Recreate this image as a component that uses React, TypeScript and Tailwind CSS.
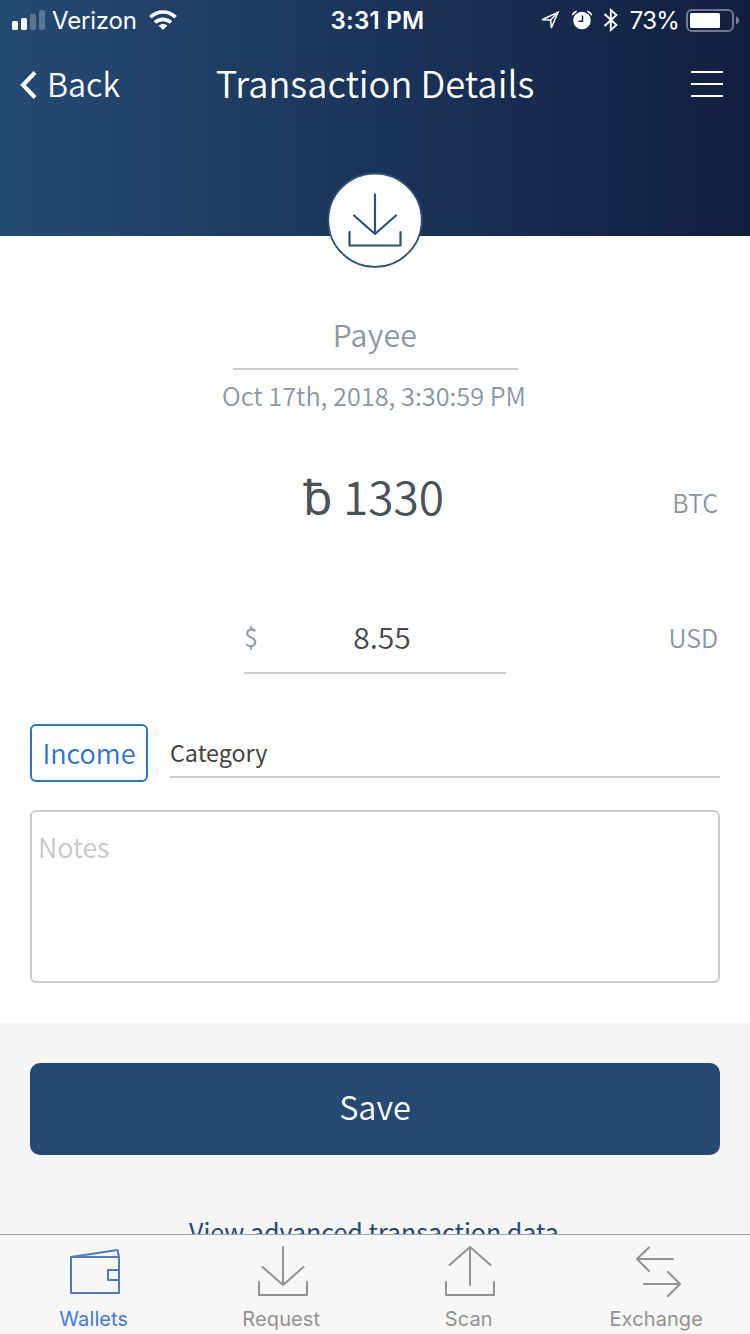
import React from "react";

const sans = "font-['Noto_Sans_CJK_SC',sans-serif]";
const system = "font-['Inter',sans-serif]";

function StatusBar() {
  return (
    <div className={`flex h-10 items-center justify-between pl-3 pr-[10px] text-white ${system}`}>
      <div className="flex w-[260px] items-center">
        <svg width="34" height="20" viewBox="0 0 34 20" fill="#fff">
          <rect x="0" y="11" width="6" height="9" rx="1.8" />
          <rect x="9" y="8" width="6" height="12" rx="1.8" />
          <rect x="18" y="4" width="6" height="16" rx="1.8" opacity=".25" />
          <rect x="27" y="0" width="6" height="20" rx="1.8" opacity=".25" />
        </svg>
        <span className="ml-[6px] pt-[2px] text-2xl leading-[38px] tracking-[-0.2px]">Verizon</span>
        <svg className="ml-[12px]" width="28" height="20" viewBox="0 0 28 20" fill="none" stroke="#fff" strokeWidth="3.600">
          <path d="M1.300 7.300C8.500 .2 19.500 .2 26.700 7.300" />
          <path d="M6 12.500C10.500 8.300 17.500 8.300 22 12.500" />
          <path d="M14 20 9.700 15.700C12 13.500 16 13.500 18.300 15.700Z" fill="#fff" stroke="none" />
        </svg>
      </div>
      <span className="pl-[3px] pt-[2px] text-2xl font-semibold leading-[38px] tracking-[0.3px]">3:31 PM</span>
      <div className="flex w-[260px] items-center justify-end">
        <svg width="22" height="22" viewBox="0 0 22 22" fill="none" stroke="#fff" strokeWidth="1.500">
          <path d="M3 10.700 19 3.300 12.300 19 11.700 11Z" />
          <path d="M11.700 11 18.500 3.500" strokeWidth="1.300" />
        </svg>
        <svg className="ml-[11px]" width="20" height="20" viewBox="0 0 20 20">
          <circle cx="10" cy="10.500" r="8.800" fill="#fff" />
          <path d="M.2 5.200A5 5 0 0 1 4.800 1.200ZM15.200 1.200A5 5 0 0 1 19.800 5.200Z" fill="#fff" stroke="#fff" strokeWidth="1" />
          <path d="M10.500 5.500V11.300H6.500" fill="none" stroke="#18294f" strokeWidth="1.500" />
        </svg>
        <svg className="ml-[11px]" width="16" height="24" viewBox="0 0 16 24" fill="none" stroke="#fff" strokeWidth="1.900">
          <path d="M1.500 6 13.500 17 7.800 22V2L13.500 7 1.500 18" />
        </svg>
        <span className="ml-[11px] pt-[2px] text-2xl leading-[38px] tracking-[-0.8px]">73%</span>
        <svg className="ml-[7px] mt-[1px]" width="54" height="23" viewBox="0 0 54 23">
          <rect x="1" y="1" width="46" height="21" rx="5" fill="none" stroke="#fff" strokeOpacity=".4" strokeWidth="2" />
          <rect x="4" y="4" width="30" height="15" rx="1.500" fill="#fff" />
          <path d="M50 7.500C54 9 54 14 50 15.500Z" fill="#fff" opacity=".45" />
        </svg>
      </div>
    </div>
  );
}

function NavBar() {
  return (
    <div className="flex h-[88px] items-start justify-between pl-5 pr-[27px] text-white">
      <div className="flex w-[180px] items-start">
        <svg className="mt-[31px]" width="18" height="28" viewBox="0 0 18 28" fill="none" stroke="#fff" strokeWidth="4">
          <path d="M15 1.500 3 14 15 26.500" />
        </svg>
        <span className="ml-[9px] text-[32.300px] font-[350] leading-[86px]">Back</span>
      </div>
      <h1 className="-ml-[1px] whitespace-nowrap text-[36.300px] font-[350] leading-[85px]">Transaction Details</h1>
      <div className="flex w-[172px] justify-end">
        <svg className="mt-[30px]" width="32" height="28" viewBox="0 0 32 28" stroke="#fff" strokeWidth="2">
          <path d="M0 2H32M0 14H32M0 26H32" />
        </svg>
      </div>
    </div>
  );
}

const icons = {
  wallet: "M4 12H52V48H4ZM4 12 50.500 5 52 12M52 25H41V35H52",
  request: "M29 2V40M8.500 22 29 40 49.500 22M5 37V50H53V37",
  scan: "M28 40V2M7.500 20 28 2 48.500 20M4 37V50H52V37",
  exchange: "M44 14H8M20 2.500 8 14 20 26M15 39H51M39 27 51 39 39 51",
};

function Tab({ icon, label, active = false }: { icon: keyof typeof icons; label: string; active?: boolean }) {
  return (
    <div className={`flex flex-1 flex-col items-center pt-[10px] ${active ? "text-[#4477e8]" : "text-[#929292]"}`}>
      <svg width="54" height="52" viewBox="0 0 54 52" fill="none" stroke={active ? "#527abd" : "#929292"} strokeWidth="2" strokeLinecap="round" strokeLinejoin="round">
        <path d={icons[icon]} />
      </svg>
      <span className={`mt-[10px] text-[20px] leading-6 tracking-[0.1px] ${system}`}>{label}</span>
    </div>
  );
}

export default function App() {
  return (
    <div className={`flex h-[1334px] w-[750px] flex-col overflow-hidden bg-white ${sans}`}>
      <header className="relative h-[236px] shrink-0 bg-linear-to-r from-[#244b73] to-[#111e40]">
        <StatusBar />
        <NavBar />
        <svg className="absolute left-[327px] top-[172px]" width="96" height="96" viewBox="0 0 96 96" fill="none" stroke="#28527a" strokeWidth="2">
          <circle cx="48" cy="48.200" r="46.700" fill="#fff" strokeWidth="1.800" />
          <path d="M48 22.500V62M27 43.500 48 62 69 43.500M22.500 60V73.500H73.500V60" strokeWidth="2.200" strokeLinecap="round" strokeLinejoin="round" />
        </svg>
      </header>

      <main className="flex min-h-0 flex-1 flex-col">
        <section className="flex flex-col items-center">
          <div className="mt-[66px] h-[68px] w-[285px] border-b-2 border-[#cccccc] text-center text-[30.300px] font-[350] leading-[64px] tracking-[0.3px] text-[#8a96a3]">Payee</div>
          <div className="-ml-[2px] h-[54px] text-[25.300px] font-[350] leading-[51px] text-[#8a96a3]">Oct 17th, 2018, 3:30:59 PM</div>
        </section>

        <section className="mt-9 grid h-[70px] grid-cols-[200px_1fr_200px] items-center px-8">
          <span />
          <span className="pr-[3px] text-center text-[46px] font-[350] leading-[66px] text-[#4a5157]">
            <span className="font-['Noto_Sans',sans-serif] text-[48px] font-normal leading-none">ƀ</span> 1330
          </span>
          <span className="pt-4 text-right text-[25px] font-[350] text-[#8a96a3]">BTC</span>
        </section>

        <section className="mt-[70px] flex h-[74px] justify-between pl-[244px] pr-8">
          <div className="flex h-[74px] w-[262px] items-center border-b-2 border-[#cccccc]">
            <span className="w-[14px] pt-[2px] text-[25px] font-[350] text-[#8a96a3]">$</span>
            <span className="w-[248px] text-center text-[30px] font-[350] text-[#43494f]">8.55</span>
          </div>
          <span className="text-[25px] font-[350] leading-[74px] text-[#8a96a3]">USD</span>
        </section>

        <section className="mt-[50px] flex h-[58px] shrink-0 px-[30px]">
          <div className="flex w-[118px] items-center justify-center rounded-md border-2 border-[#2d72d4] pb-[2px] text-[27px] font-[350] leading-none text-[#2d72d4]">Income</div>
          <div className="ml-[22px] h-[54px] flex-1 border-b-2 border-[#cccccc] text-[23.300px] leading-[56px] text-[#434343]">Category</div>
        </section>

        <div className="mx-[30px] mt-7 h-[173px] shrink-0 rounded-md border-2 border-[#cccccc] px-[6px] pt-[15px] text-[26.800px] font-[350] leading-10 text-[#c7c7cc]">Notes</div>

        <section className="mt-10 flex min-h-0 flex-1 flex-col items-center overflow-hidden bg-[#f5f5f5] px-[30px] pt-10">
          <button className="flex h-[92px] w-full shrink-0 justify-center rounded-[10px] bg-[#244a72] text-[32.500px] font-[350] leading-[85px] text-white">Save</button>
          <a className="-ml-[2px] mt-[56px] whitespace-nowrap text-[25px] leading-10 text-[#244a72]">View advanced transaction data</a>
        </section>
      </main>

      <nav className="flex h-[100px] shrink-0 border-t border-[#a5a5a7] bg-[#f7f7f7]">
        <Tab icon="wallet" label="Wallets" active />
        <Tab icon="request" label="Request" />
        <Tab icon="scan" label="Scan" />
        <Tab icon="exchange" label="Exchange" />
      </nav>
    </div>
  );
}
